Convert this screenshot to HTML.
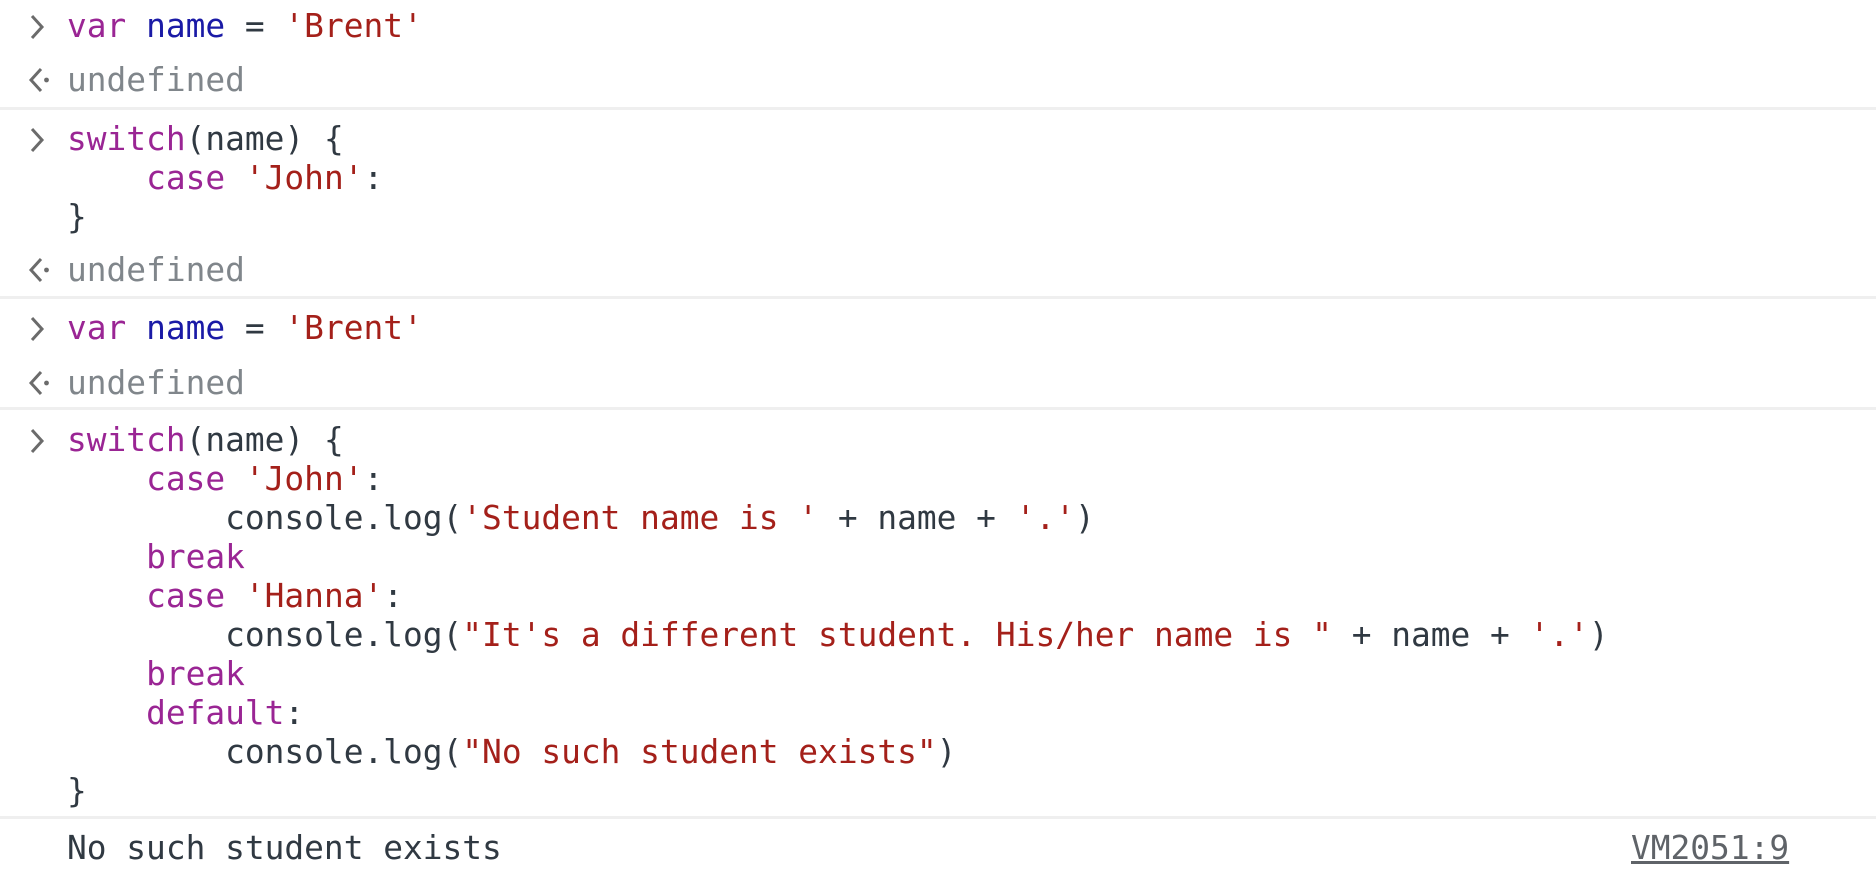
<!DOCTYPE html><html><head><style>
body{margin:0;width:1876px;height:872px;background:#fff;position:relative;overflow:hidden;font-family:"DejaVu Sans Mono","Liberation Mono",monospace;font-size:32.85px;color:#303942}
.l{position:absolute;left:67px;height:39px;line-height:39px;white-space:pre}
.k{color:#9a2594}.v{color:#1a1aa6}.s{color:#a4201a}.u{color:#80868b}
.sep{position:absolute;left:0;width:1876px;height:3px;background:#efefef}
.ic{position:absolute;left:28px;width:24px;height:26px;overflow:visible}
</style></head><body>
<svg class="ic" style="top:14px" viewBox="0 0 24 26"><path d="M4 2l10 11-10 11" fill="none" stroke="#6b6b6b" stroke-width="3"/></svg>
<div class="l" style="top:7px"><span class="k">var</span> <span class="v">name</span> = <span class="s">'Brent'</span></div>
<svg class="ic" style="top:67px" viewBox="0 0 24 26"><path d="M13 2L3 13l10 11" fill="none" stroke="#6b6b6b" stroke-width="3"/><circle cx="18.5" cy="13" r="2.4" fill="#6b6b6b"/></svg>
<div class="l u" style="top:61px">undefined</div>
<div class="sep" style="top:107px"></div>
<svg class="ic" style="top:127px" viewBox="0 0 24 26"><path d="M4 2l10 11-10 11" fill="none" stroke="#6b6b6b" stroke-width="3"/></svg>
<div class="l" style="top:120px"><span class="k">switch</span>(name) {
    <span class="k">case</span> <span class="s">'John'</span>:
}</div>
<svg class="ic" style="top:257px" viewBox="0 0 24 26"><path d="M13 2L3 13l10 11" fill="none" stroke="#6b6b6b" stroke-width="3"/><circle cx="18.5" cy="13" r="2.4" fill="#6b6b6b"/></svg>
<div class="l u" style="top:251px">undefined</div>
<div class="sep" style="top:296px"></div>
<svg class="ic" style="top:316px" viewBox="0 0 24 26"><path d="M4 2l10 11-10 11" fill="none" stroke="#6b6b6b" stroke-width="3"/></svg>
<div class="l" style="top:309px"><span class="k">var</span> <span class="v">name</span> = <span class="s">'Brent'</span></div>
<svg class="ic" style="top:370px" viewBox="0 0 24 26"><path d="M13 2L3 13l10 11" fill="none" stroke="#6b6b6b" stroke-width="3"/><circle cx="18.5" cy="13" r="2.4" fill="#6b6b6b"/></svg>
<div class="l u" style="top:364px">undefined</div>
<div class="sep" style="top:407px"></div>
<svg class="ic" style="top:428px" viewBox="0 0 24 26"><path d="M4 2l10 11-10 11" fill="none" stroke="#6b6b6b" stroke-width="3"/></svg>
<div class="l" style="top:421px"><span class="k">switch</span>(name) {
    <span class="k">case</span> <span class="s">'John'</span>:
        console.log(<span class="s">'Student name is '</span> + name + <span class="s">'.'</span>)
    <span class="k">break</span>
    <span class="k">case</span> <span class="s">'Hanna'</span>:
        console.log(<span class="s">"It's a different student. His/her name is "</span> + name + <span class="s">'.'</span>)
    <span class="k">break</span>
    <span class="k">default</span>:
        console.log(<span class="s">"No such student exists"</span>)
}</div>
<div class="sep" style="top:816px"></div>
<div class="l" style="top:829px">No such student exists</div>
<div class="l" style="top:829px;left:1631px;color:#5f6368;text-decoration:underline">VM2051:9</div>
</body></html>
